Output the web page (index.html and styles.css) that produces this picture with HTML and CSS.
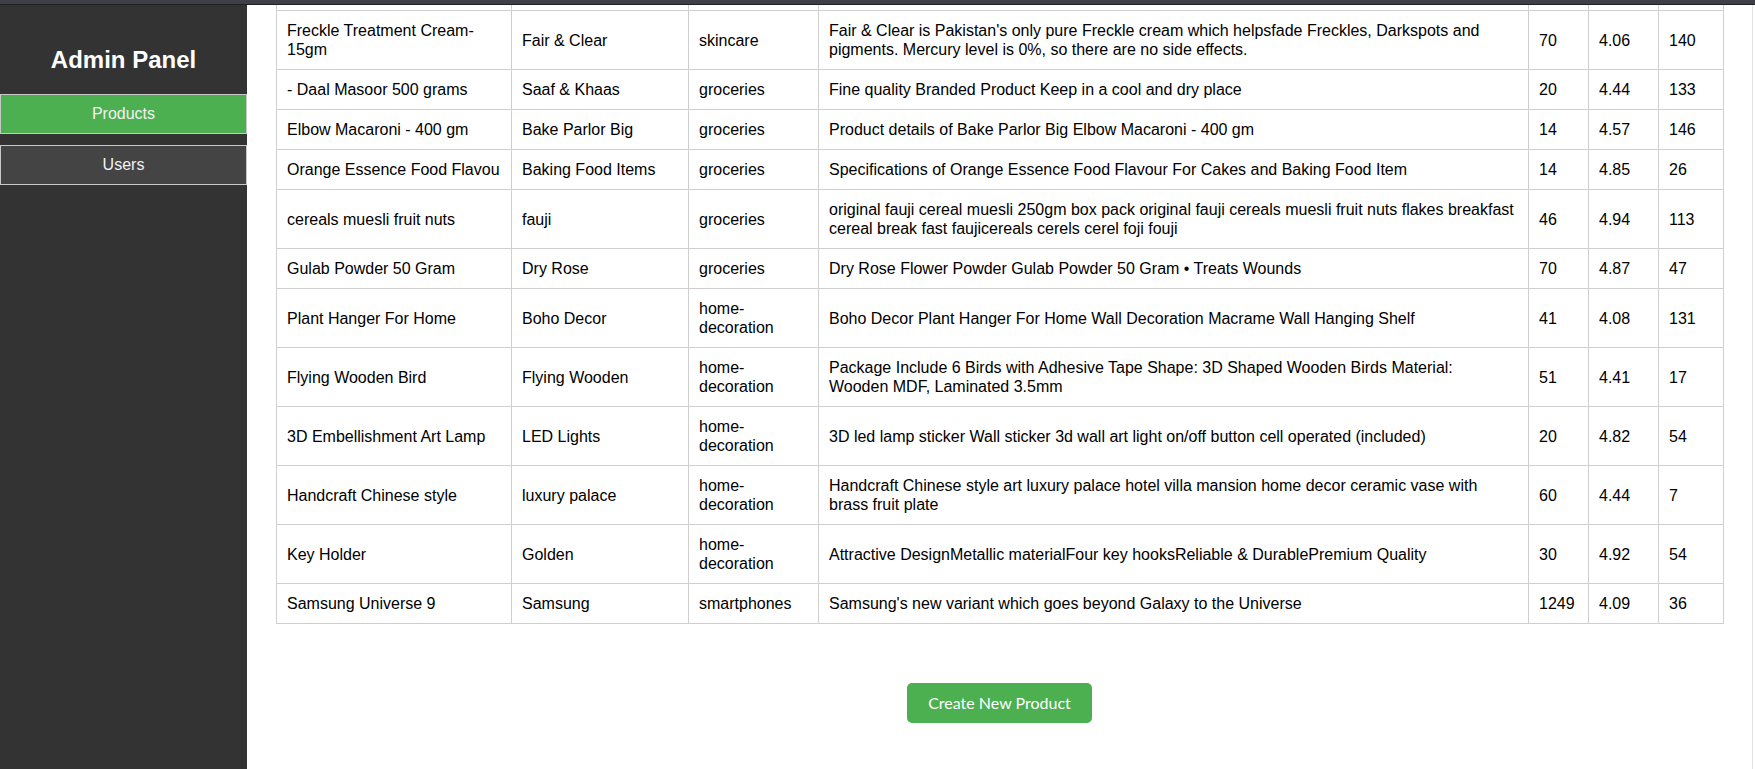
FILE: index.html
```html
<!DOCTYPE html>
<html lang="en">
<head>
<meta charset="utf-8">
<title>Admin Panel</title>
<link rel="stylesheet" href="styles.css">
</head>
<body>
<div class="topbar"></div>
<div class="layout">
  <aside class="sidebar">
    <h2 class="brand">Admin Panel</h2>
    <nav class="nav">
      <a class="nav-item active" href="#">Products</a>
      <a class="nav-item" href="#">Users</a>
    </nav>
  </aside>
  <main class="main">
    <table class="products">
      <colgroup>
        <col class="c-title"><col class="c-brand"><col class="c-cat"><col class="c-desc"><col class="c-price"><col class="c-rating"><col class="c-stock">
      </colgroup>
      <tbody>
        <tr class="scrolled"><td></td><td></td><td></td><td></td><td></td><td></td><td></td></tr>
        <tr><td>Freckle Treatment Cream- 15gm</td><td>Fair &amp; Clear</td><td>skincare</td><td class="desc">Fair &amp; Clear is Pakistan's only pure Freckle cream which helpsfade Freckles, Darkspots and pigments. Mercury level is 0%, so there are no side effects.</td><td>70</td><td>4.06</td><td>140</td></tr>
        <tr><td>- Daal Masoor 500 grams</td><td>Saaf &amp; Khaas</td><td>groceries</td><td class="desc">Fine quality Branded Product Keep in a cool and dry place</td><td>20</td><td>4.44</td><td>133</td></tr>
        <tr><td>Elbow Macaroni - 400 gm</td><td>Bake Parlor Big</td><td>groceries</td><td class="desc">Product details of Bake Parlor Big Elbow Macaroni - 400 gm</td><td>14</td><td>4.57</td><td>146</td></tr>
        <tr><td>Orange Essence Food Flavou</td><td>Baking Food Items</td><td>groceries</td><td class="desc">Specifications of Orange Essence Food Flavour For Cakes and Baking Food Item</td><td>14</td><td>4.85</td><td>26</td></tr>
        <tr><td>cereals muesli fruit nuts</td><td>fauji</td><td>groceries</td><td class="desc">original fauji cereal muesli 250gm box pack original fauji cereals muesli fruit nuts flakes breakfast cereal break fast faujicereals cerels cerel foji fouji</td><td>46</td><td>4.94</td><td>113</td></tr>
        <tr><td>Gulab Powder 50 Gram</td><td>Dry Rose</td><td>groceries</td><td class="desc">Dry Rose Flower Powder Gulab Powder 50 Gram • Treats Wounds</td><td>70</td><td>4.87</td><td>47</td></tr>
        <tr><td>Plant Hanger For Home</td><td>Boho Decor</td><td>home-decoration</td><td class="desc">Boho Decor Plant Hanger For Home Wall Decoration Macrame Wall Hanging Shelf</td><td>41</td><td>4.08</td><td>131</td></tr>
        <tr><td>Flying Wooden Bird</td><td>Flying Wooden</td><td>home-decoration</td><td class="desc">Package Include 6 Birds with Adhesive Tape Shape: 3D Shaped Wooden Birds Material: Wooden MDF, Laminated 3.5mm</td><td>51</td><td>4.41</td><td>17</td></tr>
        <tr><td>3D Embellishment Art Lamp</td><td>LED Lights</td><td>home-decoration</td><td class="desc">3D led lamp sticker Wall sticker 3d wall art light on/off button cell operated (included)</td><td>20</td><td>4.82</td><td>54</td></tr>
        <tr><td>Handcraft Chinese style</td><td>luxury palace</td><td>home-decoration</td><td class="desc">Handcraft Chinese style art luxury palace hotel villa mansion home decor ceramic vase with brass fruit plate</td><td>60</td><td>4.44</td><td>7</td></tr>
        <tr><td>Key Holder</td><td>Golden</td><td>home-decoration</td><td class="desc">Attractive DesignMetallic materialFour key hooksReliable &amp; DurablePremium Quality</td><td>30</td><td>4.92</td><td>54</td></tr>
        <tr><td>Samsung Universe 9</td><td>Samsung</td><td>smartphones</td><td class="desc">Samsung's new variant which goes beyond Galaxy to the Universe</td><td>1249</td><td>4.09</td><td>36</td></tr>
      </tbody>
    </table>
    <div class="actions">
      <button class="btn-create" type="button">Create New Product</button>
    </div>
  </main>
</div>
</body>
</html>
```

FILE: styles.css
```css
html, body {
  margin: 0;
  padding: 0;
  height: 100%;
  overflow: hidden;
  background: #fff;
  font-family: "Liberation Sans", Arial, sans-serif;
  color: #000;
}

.topbar {
  height: 4px;
  background: #3e4047;
  border-bottom: 1px solid #1f2023;
}

.layout {
  display: flex;
  height: calc(100vh - 5px);
}

.sidebar {
  width: 247px;
  flex: none;
  background: #333;
  padding-top: 41px;
  box-sizing: border-box;
}

.brand {
  margin: 0 0 20px;
  font-size: 24px;
  line-height: 28px;
  font-weight: bold;
  color: #fff;
  text-align: center;
}

.nav {
  display: flex;
  flex-direction: column;
  gap: 11px;
}

.nav-item {
  display: block;
  padding: 10px;
  border: 1px solid #c8c8c8;
  background: #444;
  color: #f2f2f2;
  font-size: 16px;
  line-height: 18px;
  text-align: center;
  text-decoration: none;
}

.nav-item.active {
  background: #4caf50;
}

.main {
  flex: 1;
  min-width: 0;
  display: flex;
  flex-direction: column;
  justify-content: flex-end;
  overflow: hidden;
  padding: 0 29px 46px 29px;
  margin-right: 2px;
  border-right: 1px solid #e2e2e2;
}

.products {
  width: 100%;
  flex: none;
  table-layout: fixed;
  border-collapse: collapse;
  font-size: 16px;
  line-height: 19px;
}

.c-title { width: 235px; }
.c-brand { width: 177px; }
.c-cat { width: 130px; }
.c-desc { width: 710px; }
.c-price { width: 60px; }
.c-rating { width: 70px; }
.c-stock { width: 65px; }

.products td {
  border: 1px solid #cfcfcf;
  padding: 10px;
  text-align: left;
  vertical-align: middle;
}

.products td.desc {
  padding-right: 14px;
}

.products tr.scrolled td {
  height: 19px;
}

.actions {
  flex: none;
  display: flex;
  justify-content: center;
  margin-top: 59px;
}

.btn-create {
  background: #4caf50;
  color: #fff;
  border: none;
  border-radius: 5px;
  padding: 10px 21px;
  font-family: Lato, "Open Sans", sans-serif;
  font-size: 16px;
  line-height: 20px;
}
```
